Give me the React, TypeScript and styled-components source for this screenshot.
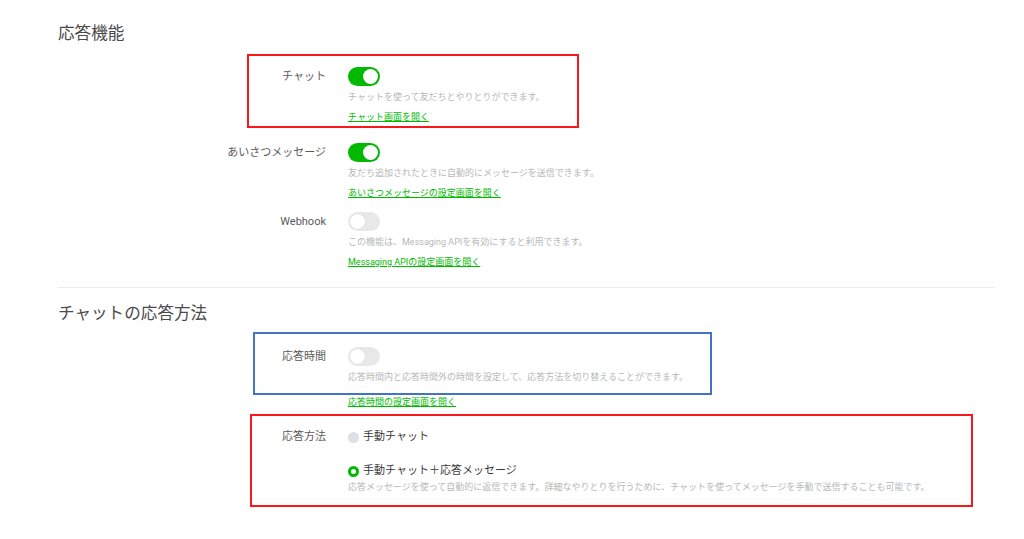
import styled, { createGlobalStyle } from "styled-components";

const GlobalStyle = createGlobalStyle`
  body {
    margin: 0;
    background: #fff;
    font-family: Roboto, "Noto Sans CJK JP", sans-serif;
  }
`;

interface RowData {
  label: string;
  on: boolean;
  desc: string;
  link: string;
}

const basicRows: RowData[] = [
  { label: "チャット", on: true, desc: "チャットを使って友だちとやりとりができます。", link: "チャット画面を開く" },
  { label: "あいさつメッセージ", on: true, desc: "友だち追加されたときに自動的にメッセージを送信できます。", link: "あいさつメッセージの設定画面を開く" },
  { label: "Webhook", on: false, desc: "この機能は、Messaging APIを有効にすると利用できます。", link: "Messaging APIの設定画面を開く" },
];

// annotation boxes, offsets relative to the row they mark
const marks = [
  { color: "#f5191c", left: 189, top: -13, width: 332, height: 74 },
  null,
  null,
];

export default function App() {
  return (
    <Page>
      <GlobalStyle />
      <Heading>応答機能</Heading>
      <Rows>
        {basicRows.map((r, i) => (
          <Row key={r.label} $top={i === 0 ? 0 : i === 1 ? 19 : 12}>
            <Label>{r.label}</Label>
            <Content>
              <Toggle $on={r.on} />
              <Desc>{r.desc}</Desc>
              <Link href="#">{r.link}</Link>
            </Content>
            {marks[i] && (
              <Frame
                $color={marks[i]!.color}
                $left={marks[i]!.left}
                $top={marks[i]!.top}
                $width={marks[i]!.width}
                $height={marks[i]!.height}
              />
            )}
          </Row>
        ))}
      </Rows>

      <Divider />

      <Heading>チャットの応答方法</Heading>
      <Rows>
        <Row $top={0}>
          <Label>応答時間</Label>
          <Content>
            <Toggle $on={false} />
            <Desc>応答時間内と応答時間外の時間を設定して、応答方法を切り替えることができます。</Desc>
            <Link href="#" $gap={11}>応答時間の設定画面を開く</Link>
          </Content>
          <Frame $color="#4472c4" $left={195} $top={-15} $width={459} $height={63} />
        </Row>
        <Row $top={20}>
          <Label $lh={16}>応答方法</Label>
          <Content>
            <RadioItem>
              <Radio $checked={false} />
              手動チャット
            </RadioItem>
            <RadioItem $gap={18}>
              <Radio $checked />
              手動チャット＋応答メッセージ
            </RadioItem>
            <Desc $gap={1}>
              応答メッセージを使って自動的に返信できます。詳細なやりとりを行うために、チャットを使ってメッセージを手動で送信することも可能です。
            </Desc>
          </Content>
          <Frame $color="#f5191c" $left={192} $top={-15} $width={723} $height={93} />
        </Row>
      </Rows>
    </Page>
  );
}

const Page = styled.div`
  padding: 22px 29px 30px 58px;
`;

const Heading = styled.h2`
  margin: 0;
  font-size: 16.6px;
  line-height: 24px;
  font-weight: 400;
  color: #4a4a4a;
`;

const Rows = styled.div`
  display: flex;
  flex-direction: column;
  margin-top: 21px;
`;

const Row = styled.div<{ $top: number }>`
  position: relative;
  display: grid;
  grid-template-columns: 268px 1fr;
  column-gap: 22px;
  margin-top: ${(p) => p.$top}px;
`;

const Label = styled.div<{ $lh?: number }>`
  text-align: right;
  font-size: 11px;
  line-height: ${(p) => p.$lh ?? 19}px;
  color: #5a5a5a;
`;

const Content = styled.div`
  display: flex;
  flex-direction: column;
  align-items: flex-start;
`;

const Toggle = styled.span<{ $on: boolean }>`
  position: relative;
  width: 32px;
  height: 19px;
  border-radius: 10px;
  background: ${(p) => (p.$on ? "#00b900" : "#e8e8e8")};

  &::after {
    content: "";
    position: absolute;
    top: 2px;
    left: ${(p) => (p.$on ? "15px" : "2px")};
    width: 15px;
    height: 15px;
    border-radius: 50%;
    background: #fff;
    box-shadow: 0 0 1px rgba(0, 0, 0, 0.15);
  }
`;

const Desc = styled.div<{ $gap?: number }>`
  margin-top: ${(p) => p.$gap ?? 4}px;
  font-size: 9px;
  line-height: 14px;
  color: #b8b8b8;
  white-space: nowrap;
`;

const Link = styled.a<{ $gap?: number }>`
  margin-top: ${(p) => p.$gap ?? 6}px;
  font-size: 9px;
  line-height: 14px;
  color: #00b900;
  text-decoration: underline;
  white-space: nowrap;
`;

const RadioItem = styled.div<{ $gap?: number }>`
  display: flex;
  align-items: center;
  gap: 4px;
  margin-top: ${(p) => p.$gap ?? 0}px;
  font-size: 11px;
  line-height: 16px;
  color: #3a3a3a;
`;

const Radio = styled.span<{ $checked: boolean }>`
  box-sizing: border-box;
  width: 11px;
  height: 11px;
  border-radius: 50%;
  background: ${(p) => (p.$checked ? "#fff" : "#dde0e4")};
  border: ${(p) => (p.$checked ? "3px solid #00b900" : "none")};
`;

const Divider = styled.hr`
  margin: 18px 0 14px;
  border: none;
  height: 1px;
  background: #ececec;
`;

const Frame = styled.div<{ $color: string; $left: number; $top: number; $width: number; $height: number }>`
  position: absolute;
  left: ${(p) => p.$left}px;
  top: ${(p) => p.$top}px;
  width: ${(p) => p.$width}px;
  height: ${(p) => p.$height}px;
  box-sizing: border-box;
  border: 2px solid ${(p) => p.$color};
  pointer-events: none;
`;
